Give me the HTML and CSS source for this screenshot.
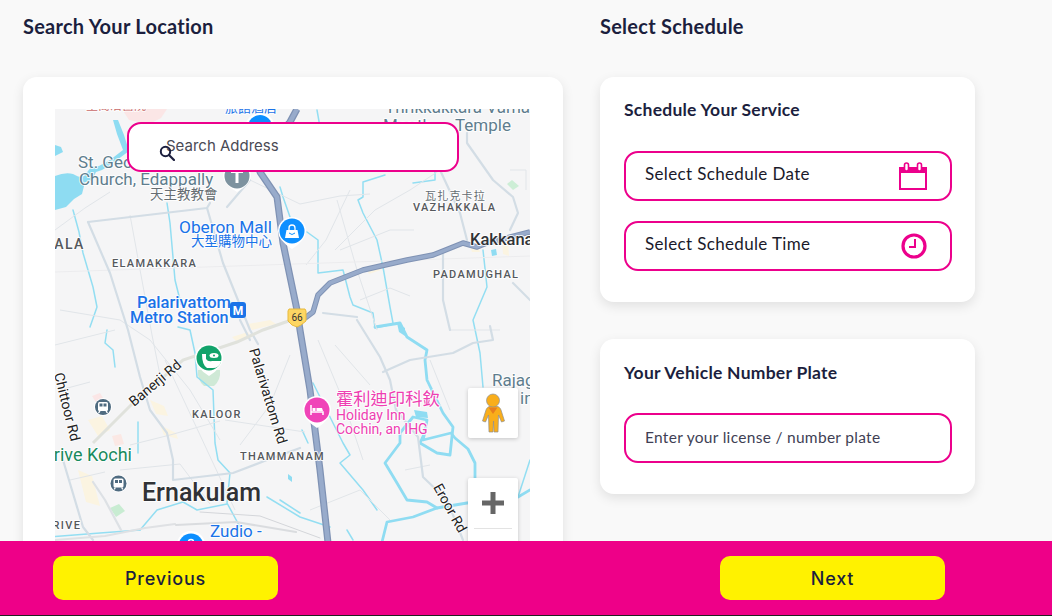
FILE: index.html
```html
<!DOCTYPE html>
<html lang="en">
<head>
<meta charset="utf-8">
<title>Schedule</title>
<link rel="stylesheet" href="styles.css">
</head>
<body>
<main class="page">
  <section class="col-left">
    <h2 class="section-title">Search Your Location</h2>
    <div class="card map-card">
      <div class="map">
        <svg class="map-svg" viewBox="55 109 475 450" width="475" height="450" xmlns="http://www.w3.org/2000/svg">
          <rect x="55" y="109" width="475" height="450" fill="#f5f5f6"/>
          <!-- parks / tinted areas -->
          <path d="M122 109h45l-6 9-12 6-20-4z" fill="#fbe6e6"/>
          <path d="M204 386q-7-6-6-16h22q1 10-6 16z" fill="#cfe9d6"/>
          <path d="M110 508l9-4 6 7-9 6z" fill="#c8ecd2"/>
          <path d="M92 396l8-3 5 8-8 3z" fill="#fbe6e6"/>
          <path d="M112 436l9-2 3 10-9 2z" fill="#fbe8e4"/>
          <path d="M512 180l7 6-6 4-6-6z" fill="#cdeed6"/>
          <path d="M88 420l14-4 8 14-12 6zM78 470l14 6 8 30-14-4zM150 400l14 6 4 10-12-2zM160 425l16 8 2 6-14-4zM366 268l12-4 3 6-12 4zM470 246l8 0 2 6-8 0zM502 240l6 2 1 14-6-2zM248 324l22-4 6 4-24 6zM232 337l16-5 2 4-14 5z" fill="#fbf4e1"/>
          <!-- water -->
          <path d="M55 176q10-4 18-2l8 4 3 8-2 8-8 5-8 8-11 3z" fill="#8edcf2"/>
          <path d="M55 145l6 2 2 5-8 4zM70 178l14-2 8-10 7 0 11-6 13-10-6-16-4-14 5 0 6 15 5 16-16 12-11 7-6 2-4 8-12 4z" fill="#8edcf2"/>
          <g fill="none" stroke="#93def2" stroke-width="1.500" stroke-linejoin="round" stroke-linecap="round">
            <path d="M73 210l6 22 4 21 10 34 4 20-7 20"/>
            <path d="M107 330l-2 13 8 7 2 17"/>
            <path d="M167 203l3 20 5 57 6 24"/>
            <path d="M178 327l12 3 5 23 2 24 16 13 2 53 3 17 12 13-3 30 13 24"/>
            <path d="M138 422v31"/>
            <path d="M140 530l17-20 26-8 14 8 30-6"/>
            <path d="M50 537l50-4 40-3"/>
            <path d="M267 497l33 20 30 10"/>
            <path d="M317 110l3 17"/>
            <path d="M385 175l-22 7v15l-5 3 5 13 14 27 6 27 7 40 3 16"/>
            <path d="M413 183l22-3v-10"/>
            <path d="M280 187l3 10 7 20"/>
            <path d="M307 232l11 8v33l25-3 7 27 3 8 20 8 2 15 23-5"/>
            <path d="M483 250l4 37-14 33 7 33 3 34"/>
            <path d="M313 383l30 60 7 12-10 8 23 27 14 20"/>
            <path d="M302 430l6 13"/>
            <path d="M280 500l20 13"/>
            <path d="M347 530l6 10"/>
            <path d="M530 460l-12 37"/>
          </g>
          <g fill="none" stroke="#8fdcf2" stroke-width="2.800" stroke-linejoin="round" stroke-linecap="round">
            <path d="M382 542l5-20 26-5 24-9 30-5 51-6 12-7"/>
            <path d="M437 508l-10-6-20-2-10-17-12-20 15-20v-10l13-16 14 3-2 12-2 8 28-7 4 5 13 11 7 14v20"/>
            <path d="M425 432l-5 11 17 10 13 2 3-28-10-14-16-33-2-20 2-10-20-13-7-14-25 4"/>
          </g>
          <path d="M414 410l13 2 1 6-12-1z" fill="#8fdcf2"/>
          <path d="M397 323l8 5v8l-6-4z" fill="#8fdcf2"/>
          <path d="M491 250l5-1 1 6-5 1z" fill="#8fdcf2"/>
          <path d="M288 474l4 3v5l-4-3z" fill="#8fdcf2"/>
          <!-- minor roads -->
          <g fill="none" stroke="#e1e5e9" stroke-width="1">
            <path d="M55 230l30-22 25-16"/>
            <path d="M130 215l22 120 8 40"/>
            <path d="M210 160l40 20 50 24 40-8 30-2"/>
            <path d="M337 200l20 70 20 60"/>
            <path d="M350 190l-24 50-20 25"/>
            <path d="M440 170l-30 20-35 20-40 40"/>
            <path d="M340 250l50-20 24 0"/>
            <path d="M60 310l60 10 30 20"/>
            <path d="M55 345l60-15"/>
            <path d="M150 340l40 50 30 50"/>
            <path d="M130 445l40-10 50-14"/>
            <path d="M165 360l70 150"/>
            <path d="M240 445l30-40 20-50"/>
            <path d="M318 340l25 60 20 60"/>
            <path d="M310 510l50-20 30 30"/>
            <path d="M405 470l25-5"/>
            <path d="M510 170h16v20"/>
            <path d="M55 272l240-8 235-8" stroke="#ececee"/>
            <path d="M225 420l80 12"/>
            <path d="M120 470l60-6 30 40"/>
            <path d="M335 345l35 40"/>
            <path d="M430 360l20 50"/>
            <path d="M70 480l35-8"/>
            <path d="M60 390l30-8"/>
            <path d="M360 300l30-12 20 8"/>
            <path d="M450 330l50 0"/>
          </g>
          <!-- medium roads -->
          <g fill="none" stroke="#d3dde5" stroke-width="2.200" stroke-linejoin="round" stroke-linecap="round">
            <path d="M88 222l119-14 3-5"/>
            <path d="M88 222l22 51 18 57 12 47 10 33 17 23 6 27v20l60-7 34-13 33-12"/>
            <path d="M207 208l16 55 27 67 8 14"/>
            <path d="M227 207l23-27"/>
            <path d="M467 133v10l26 37 20 17 5 16-8 17"/>
            <path d="M440 170l20 43 7 27"/>
            <path d="M443 253v47l7 30"/>
            <path d="M513 283l17 17"/>
            <path d="M357 320l23 37 10 23 6 30 22 27 5 40 24 23 16 40"/>
            <path d="M383 372l27-12 43-7 20-10 20-3-3-14"/>
            <path d="M323 313l34 4"/>
            <path d="M63 460l20 67 10 13"/>
            <path d="M55 540l50-4 40-8 30-4" stroke="#dfe1e4"/>
            <path d="M176 525l60-3 60 10" stroke="#dadcdf"/>
            <path d="M200 512l60 4 60 22" stroke="#d4d6da" stroke-width="1"/>
            <path d="M93 482l12 18 16 30" stroke="#dde1e5"/>
            <path d="M240 320l10 20"/>
          </g>
          <path d="M93 443l40-40 50-43 54-18 26-12 37-13" fill="none" stroke="#e0e2dc" stroke-width="3"/>
          <!-- highways -->
          <g fill="none" stroke-linejoin="round">
            <path d="M297 109l-7 13-22 24-10 18 2 8 17 25 6 46 14 67 3 20 10 60 10 80 11 100" stroke="#7f92b4" stroke-width="7"/>
            <path d="M297 109l-7 13-22 24-10 18 2 8 17 25 6 46 14 67 3 20 10 60 10 80 11 100" stroke="#98abcb" stroke-width="4.500"/>
            <path d="M305 318l8-6 5-17 12-12 33-13 44-10 26-5 30-12 14 4 10-4 43-11" stroke="#7f92b4" stroke-width="5.500"/>
            <path d="M305 318l8-6 5-17 12-12 33-13 44-10 26-5 30-12 14 4 10-4 43-11" stroke="#98abcb" stroke-width="3.500"/>
          </g>
          <!-- labels -->
          <g class="lbl">
            <text x="86" y="110" font-size="12" class="t-red">聖喬治醫院</text>
            <text class="t-blue" x="225" y="112" font-size="13">旅館酒店</text>
            <text class="t-grey" x="385" y="113" font-size="17">Thrikkakkara Vama</text>
            <text class="t-grey" x="383" y="131" font-size="17">Mouth</text>
            <text class="t-grey" x="455" y="131" font-size="17">Temple</text>
            <text class="t-grey" x="78" y="168" font-size="17">St. George's</text>
            <text class="t-grey" x="79" y="185" font-size="17">Church, Edappally</text>
            <text class="t-cjk" x="150" y="199" font-size="13.500">天主教教會</text>
            <text class="t-blue" x="179" y="233" font-size="17.300">Oberon Mall</text>
            <text class="t-blue" x="191" y="246" font-size="13.500">大型購物中心</text>
            <text class="t-area" x="44" y="249" font-size="14" letter-spacing="1.400" font-weight="500">KALA</text>
            <text class="t-area" x="112" y="267" font-size="11" letter-spacing="1.300">ELAMAKKARA</text>
            <text class="t-blue" x="137" y="308" font-size="16.500" font-weight="500">Palarivattom</text>
            <text class="t-blue" x="130" y="323" font-size="16.200" font-weight="500">Metro Station</text>
            <text class="t-cjk" x="425" y="200" font-size="11" letter-spacing="1.200">瓦扎克卡拉</text>
            <text class="t-area" x="413" y="211" font-size="11" letter-spacing="1.300">VAZHAKKALA</text>
            <text class="t-dark" x="470" y="245" font-size="16.500" font-weight="500">Kakkanad</text>
            <text class="t-area" x="433" y="278" font-size="11" letter-spacing="1.300">PADAMUGHAL</text>
            <text class="t-road" transform="translate(134 407) rotate(-40)" font-size="14">Banerji Rd</text>
            <text class="t-road" transform="translate(249 350) rotate(73)" font-size="14">Palarivattom Rd</text>
            <text class="t-road" transform="translate(54 374) rotate(76)" font-size="14">Chittoor Rd</text>
            <text class="t-road" transform="translate(433 487) rotate(61)" font-size="14">Eroor Rd</text>
            <text class="t-area" x="192" y="418" font-size="11" letter-spacing="1.300">KALOOR</text>
            <text class="t-area" x="240" y="460" font-size="11" letter-spacing="1.300">THAMMANAM</text>
            <text class="t-green" x="42" y="461" font-size="18">Drive Kochi</text>
            <text class="t-big" x="142" y="501" font-size="25" font-weight="500">Ernakulam</text>
            <text class="t-area" x="33" y="529" font-size="11" letter-spacing="1.300">MARIVE</text>
            <text class="t-blue" x="210" y="537" font-size="17">Zudio -</text>
            <text class="t-pink" x="336" y="405" font-size="17.300">霍利迪印科欽</text>
            <text class="t-pink" x="336" y="420" font-size="14">Holiday Inn</text>
            <text class="t-pink" x="336" y="434" font-size="14">Cochin, an IHG</text>
            <text class="t-grey" x="492" y="386" font-size="17">Rajagiri</text>
            <text class="t-grey" x="520" y="404" font-size="17">in</text>
          </g>
          <!-- metro M -->
          <rect x="230" y="302" width="16" height="16" rx="3" fill="#1a73e8"/>
          <text x="238" y="315" class="t-m" font-size="12" font-weight="700" fill="#fff">M</text>
          <!-- highway shield -->
          <path d="M289 309h16l1 2v10l-5 4-4 2-5-2-4-4v-10z" fill="#fdd663" stroke="#e8b93c" stroke-width="1"/>
          <text x="297" y="321" class="t-m" font-size="10" fill="#333">66</text>
          <!-- pins -->
          <g>
            <path d="M260 113a15 15 0 0 1 15 15q0 8-15 18q-15-10-15-18a15 15 0 0 1 15-15z" fill="#fff"/>
            <circle cx="260" cy="127" r="12" fill="#0d8fff"/>
            <path d="M237 162a14 14 0 0 1 14 14q0 8-14 16q-14-8-14-16a14 14 0 0 1 14-14z" fill="#fff"/>
            <circle cx="237" cy="176" r="12.500" fill="#7d929f"/>
            <path d="M231 170h12v3h-4.500v10h-3v-10h-4.500z" fill="#fff"/>
            <path d="M292 217a14 14 0 0 1 14 14q0 9-14 18q-14-9-14-18a14 14 0 0 1 14-14z" fill="#fff"/>
            <circle cx="292" cy="231" r="12.500" fill="#0d8fff"/>
            <path d="M286.500 230h11l1.500 8h-14z" fill="#fff"/>
            <path d="M289 230v-2a3 3 0 0 1 6 0v2" fill="none" stroke="#fff" stroke-width="1.300"/>
            <path d="M289 233q3 3 6 0" fill="none" stroke="#0d8fff" stroke-width="1"/>
            <path d="M209 344a14 14 0 0 1 14 14q0 9-14 18q-14-9-14-18a14 14 0 0 1 14-14z" fill="#fff"/>
            <circle cx="209" cy="358" r="12.500" fill="#12a36b"/>
            <path d="M202 354h4v5q2 3 6 2h9v1q-2 6-8 6h-6q-5-3-5-14z" fill="#fff"/>
            <ellipse cx="214" cy="355.500" rx="4.500" ry="2.500" fill="#fff"/>
            <circle cx="214" cy="355.500" r="1" fill="#12a36b"/>
            <path d="M317 396a14 14 0 0 1 14 14q0 9-14 18q-14-9-14-18a14 14 0 0 1 14-14z" fill="#fff"/>
            <circle cx="317" cy="410" r="12.500" fill="#f044b8"/>
            <path d="M311 405v10M311 412h12v3" fill="none" stroke="#fff" stroke-width="1.500"/>
            <path d="M312.500 408h3v3h-3zM316.500 408h5.500l1 3h-6.500z" fill="#fff"/>
            <path d="M191 531a14 14 0 0 1 14 14v20h-28v-20a14 14 0 0 1 14-14z" fill="#fff"/>
            <circle cx="191" cy="546" r="12.500" fill="#0d8fff"/>
            <circle cx="191" cy="542" r="2.500" fill="none" stroke="#fff" stroke-width="1.500"/>
            <g>
              <circle cx="103" cy="407" r="9" fill="#fff"/>
              <circle cx="103" cy="407" r="8" fill="#4f6b80"/>
              <rect x="98" y="402" width="10" height="9" rx="1.500" fill="#fff"/>
              <rect x="99.500" y="403.500" width="3" height="3" fill="#4f6b80"/>
              <rect x="103.500" y="403.500" width="3" height="3" fill="#4f6b80"/>
              <path d="M99 411l-1 2h1.500l1-2zM107 411l1 2h-1.500l-1-2z" fill="#fff"/>
            </g>
            <g>
              <circle cx="118.500" cy="483.500" r="9" fill="#fff"/>
              <circle cx="118.500" cy="483.500" r="8" fill="#4f6b80"/>
              <rect x="113.500" y="478.500" width="10" height="9" rx="1.500" fill="#fff"/>
              <rect x="115" y="480" width="3" height="3" fill="#4f6b80"/>
              <rect x="119" y="480" width="3" height="3" fill="#4f6b80"/>
              <path d="M114.500 487.500l-1 2h1.500l1-2zM122.500 487.500l1 2h-1.500l-1-2z" fill="#fff"/>
            </g>
          </g>
        </svg>

        <div class="search-box">
          <span class="search-text">Search Address</span>
          <svg class="search-icon" viewBox="0 0 16 16" width="16" height="16" xmlns="http://www.w3.org/2000/svg">
            <circle cx="6.500" cy="6.500" r="4.700" fill="none" stroke="#1c1f3e" stroke-width="2"/>
            <path d="M10 10l5 5" stroke="#1c1f3e" stroke-width="2.200" stroke-linecap="round"/>
          </svg>
        </div>

        <div class="map-control pegman">
          <svg viewBox="0 0 24 40" width="24" height="40" xmlns="http://www.w3.org/2000/svg">
            <path d="M12 13c-4.500 0-6 1.500-7 4l-3.500 11 3 1 3-7 .500 17h4l.5-11 .5 11h4l.500-17 3 7 3-1-3.500-11c-1-2.500-2.500-4-7-4z" fill="#f9ae1b" stroke="#8f8f8f" stroke-width=".7"/>
            <circle cx="12" cy="7.500" r="6.500" fill="#f9ae1b" stroke="#8f8f8f" stroke-width=".7"/>
            <path d="M7.500 14.500h9l-4.500 6.500z" fill="#e97f1e"/>
          </svg>
        </div>

        <div class="map-control zoom">
          <svg class="plus" viewBox="0 0 22 22" width="22" height="22" xmlns="http://www.w3.org/2000/svg">
            <path d="M8.500 0h5v8.500h8.500v5h-8.500v8.500h-5v-8.500h-8.500v-5h8.500z" fill="#666"/>
          </svg>
          <div class="zoom-divider"></div>
        </div>
      </div>
    </div>
  </section>

  <section class="col-right">
    <h2 class="section-title">Select Schedule</h2>
    <div class="card form-card">
      <h3 class="card-title">Schedule Your Service</h3>
      <div class="field-stack">
        <div class="field">
          <span class="field-text">Select Schedule Date</span>
          <svg class="field-icon" viewBox="0 1 28 28" width="28" height="28" xmlns="http://www.w3.org/2000/svg">
            <path d="M1 7h26v21h-26z" fill="none" stroke="#ec008c" stroke-width="2"/>
            <path d="M1 7h26v5h-26z" fill="#ec008c"/>
            <rect x="5.500" y="2" width="4" height="8" rx="2" fill="#fff" stroke="#ec008c" stroke-width="1.600"/>
            <rect x="18.500" y="2" width="4" height="8" rx="2" fill="#fff" stroke="#ec008c" stroke-width="1.600"/>
          </svg>
        </div>
        <div class="field">
          <span class="field-text">Select Schedule Time</span>
          <svg class="field-icon" viewBox="0 0 26 26" width="26" height="26" xmlns="http://www.w3.org/2000/svg">
            <circle cx="13" cy="13" r="11" fill="none" stroke="#ec008c" stroke-width="3.200"/>
            <path d="M14 6v8h-6" fill="none" stroke="#ec008c" stroke-width="2"/>
          </svg>
        </div>
      </div>
    </div>
    <div class="card form-card plate-card">
      <h3 class="card-title">Your Vehicle Number Plate</h3>
      <div class="field-stack plate-stack">
        <div class="field">
          <span class="field-text placeholder">Enter your license / number plate</span>
        </div>
      </div>
    </div>
  </section>
</main>

<footer class="footer">
  <button class="nav-btn btn-prev" type="button">Previous</button>
  <button class="nav-btn btn-next" type="button">Next</button>
</footer>
</body>
</html>
```
FILE: styles.css
```css
* { box-sizing: border-box; }

html, body {
  margin: 0;
  height: 616px;
  overflow: hidden;
}

body {
  background: #f9f9f9;
  font-family: "Lato", "Open Sans", sans-serif;
  color: #1c1f3e;
}

.page {
  display: flex;
  align-items: flex-start;
  gap: 37px;
  padding: 0 0 0 23px;
}

.col-left { width: 540px; flex: none; }
.col-right { width: 375px; flex: none; }

.section-title {
  margin: 0;
  padding-top: 14px;
  height: 77px;
  font-size: 20px;
  line-height: 24px;
  font-weight: 700;
  letter-spacing: .25px;
  color: #1c1f3e;
}

.card {
  background: #fff;
  border-radius: 14px;
  box-shadow: 0 4px 12px rgba(0, 0, 0, .1);
}

.map-card {
  padding: 32px 33px 32px 32px;
}

.map {
  position: relative;
  width: 475px;
  height: 450px;
  overflow: hidden;
}

.map-svg { display: block; }

.map-svg text {
  font-family: "Roboto", "Noto Sans CJK TC", sans-serif;
  paint-order: stroke;
  stroke: rgba(255, 255, 255, .85);
  stroke-width: 2px;
  stroke-linejoin: round;
}

.map-svg .t-grey { fill: #5f7d8e; }
.map-svg .t-red { fill: #c96a6a; }
.map-svg .t-cjk { fill: #666d72; }
.map-svg .t-blue { fill: #1a73e8; }
.map-svg .t-area { fill: #55585c; font-weight: 500; }
.map-svg .t-dark { fill: #303236; }
.map-svg .t-road { fill: #222; }
.map-svg .t-green { fill: #188a5e; }
.map-svg .t-big { fill: #303236; }
.map-svg .t-pink { fill: #ee3fb2; }
.map-svg .t-m { text-anchor: middle; stroke: none; }

.search-box {
  position: absolute;
  left: 72px;
  top: 13px;
  width: 332px;
  height: 50px;
  background: #fff;
  border: 2px solid #ec008c;
  border-radius: 14px;
  padding-left: 37px;
  padding-top: 12px;
}

.search-text {
  display: block;
  font-family: "Inter", "Roboto", sans-serif;
  font-size: 15px;
  line-height: 20px;
  color: #4a4a55;
}

.search-icon {
  position: absolute;
  left: 30px;
  top: 21px;
}

.map-control {
  position: absolute;
  left: 413px;
  width: 50px;
  background: #fff;
  border-radius: 2px;
  box-shadow: 0 1px 4px rgba(0, 0, 0, .2);
}

.pegman {
  top: 279px;
  height: 50px;
  display: flex;
  justify-content: center;
  align-items: center;
}

.zoom {
  top: 369px;
  height: 100px;
  display: flex;
  flex-direction: column;
  align-items: center;
  padding-top: 14px;
}

.zoom-divider {
  width: 38px;
  height: 1px;
  margin-top: 14px;
  background: #e3e3e3;
}

.form-card {
  padding: 22px 23px 31px 24px;
}

.plate-card {
  margin-top: 37px;
  padding-top: 23px;
}

.card-title {
  margin: 0;
  font-size: 17.500px;
  line-height: 22px;
  font-weight: 700;
  letter-spacing: .25px;
  color: #1c1f3e;
}

.field-stack {
  display: flex;
  flex-direction: column;
  gap: 20px;
  margin-top: 30px;
}

.plate-stack {
  margin-top: 29px;
}

.field {
  display: flex;
  align-items: center;
  justify-content: space-between;
  height: 50px;
  padding: 0 23px 0 19px;
  border: 2px solid #ec008c;
  border-radius: 14px;
}

.field-text {
  margin-bottom: 4px;
  font-size: 17px;
  line-height: 22px;
  letter-spacing: .35px;
  color: #1a1a2a;
}

.placeholder {
  margin-bottom: 2px;
  font-size: 15.500px;
  color: #3f3f55;
  letter-spacing: .3px;
}

.footer {
  position: fixed;
  left: 0;
  right: 0;
  bottom: 0;
  height: 75px;
  display: flex;
  align-items: flex-start;
  gap: 442px;
  padding: 15px 0 0 53px;
  background: #ee0088;
  border-bottom: 1px solid #222;
}

.nav-btn {
  width: 225px;
  height: 44px;
  border: 0;
  border-radius: 10px;
  background: #fff200;
  font-family: "Inter", "Roboto", sans-serif;
  font-size: 18px;
  font-weight: 500;
  letter-spacing: .8px;
  color: #1c1f3e;
}
```
